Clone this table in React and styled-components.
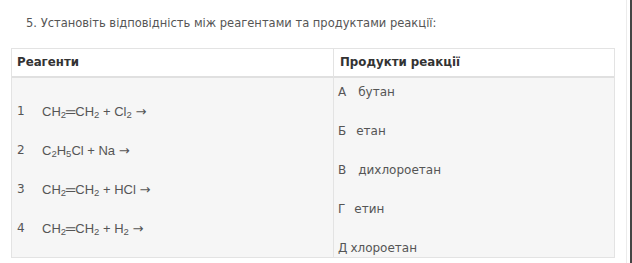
import React from 'react'
import styled, { createGlobalStyle } from 'styled-components'

const GlobalStyle = createGlobalStyle`
  html, body {
    margin: 0;
    padding: 0;
    background: #fff;
  }
  body {
    font-family: "DejaVu Sans", Verdana, sans-serif;
  }
`

const Page = styled.div`
  width: 632px;
  height: 263px;
  box-sizing: border-box;
  padding: 15px 0 0 11px;
  position: relative;
  overflow: hidden;
  background: #fff;
`

const EdgeLine = styled.div`
  position: absolute;
  top: 0;
  bottom: 0;
  right: ${p => p.right}px;
  width: ${p => p.w}px;
  background: ${p => p.color};
`

const Title = styled.div`
  font-size: 11.5px;
  line-height: 16px;
  color: #555;
  padding-left: 15px;
  margin-bottom: 17px;
`

const Table = styled.div`
  width: 604px;
  box-sizing: border-box;
  border: 1px solid #e3e3e3;
  display: grid;
  grid-template-columns: 321px 1fr;
`

const HeadCell = styled.div`
  height: 27px;
  line-height: 27px;
  padding-left: ${p => p.pad}px;
  font-weight: bold;
  font-size: 11.8px;
  color: #333;
  background: #fff;
  border-bottom: 2px solid #e0e0e0;
  border-left: ${p => (p.divider ? '1px solid #e3e3e3' : 'none')};
`

const BodyCell = styled.div`
  background: #f6f6f6;
  height: 179px;
  box-sizing: border-box;
  padding-top: ${p => p.top}px;
  padding-left: ${p => p.pad}px;
  display: flex;
  flex-direction: column;
  gap: 23px;
  border-left: ${p => (p.divider ? '1px solid #e3e3e3' : 'none')};
`

const Line = styled.div`
  display: flex;
  align-items: center;
  height: 16px;
  font-size: 12px;
  color: #555;
  white-space: nowrap;
`

const Num = styled.span`
  width: 25px;
  flex: none;
`

const Formula = styled.span`
  font-family: "Liberation Sans", Arial, sans-serif;
  font-size: 13px;
  color: #555;
  sub {
    font-size: 9.5px;
    vertical-align: -2px;
    line-height: 0;
  }
`

const Arrow = styled.span`
  font-family: "DejaVu Sans", sans-serif;
  font-size: 13px;
`

const Letter = styled.span`
  margin-right: ${p => p.gap}px;
`

const reagents = [
  { n: '1', f: <>CH<sub>2</sub>═CH<sub>2</sub> + Cl<sub>2</sub> </> },
  { n: '2', f: <>C<sub>2</sub>H<sub>5</sub>Cl + Na </> },
  { n: '3', f: <>CH<sub>2</sub>═CH<sub>2</sub> + HCl </> },
  { n: '4', f: <>CH<sub>2</sub>═CH<sub>2</sub> + H<sub>2</sub> </> }
]

const products = [
  { l: 'А', t: 'бутан', gap: 12 },
  { l: 'Б', t: 'етан', gap: 10 },
  { l: 'В', t: 'дихлороетан', gap: 12 },
  { l: 'Г', t: 'етин', gap: 9 },
  { l: 'Д', t: 'хлороетан', gap: 3 }
]

export default function App() {
  return (
    <>
      <GlobalStyle />
      <Page>
        <EdgeLine right={5} w={1} color="#ececec" />
        <EdgeLine right={0} w={2} color="#444" />
        <Title>5. Установіть відповідність між реагентами та продуктами реакції:</Title>
        <Table>
          <HeadCell pad={5}>Реагенти</HeadCell>
          <HeadCell pad={6} divider>Продукти реакції</HeadCell>
          <BodyCell top={25} pad={5}>
            {reagents.map(r => (
              <Line key={r.n}>
                <Num>{r.n}</Num>
                <Formula>
                  {r.f}
                  <Arrow>→</Arrow>
                </Formula>
              </Line>
            ))}
          </BodyCell>
          <BodyCell top={6} pad={4} divider>
            {products.map(p => (
              <Line key={p.l}>
                <Letter gap={p.gap}>{p.l}</Letter>
                {p.t}
              </Line>
            ))}
          </BodyCell>
        </Table>
      </Page>
    </>
  )
}
